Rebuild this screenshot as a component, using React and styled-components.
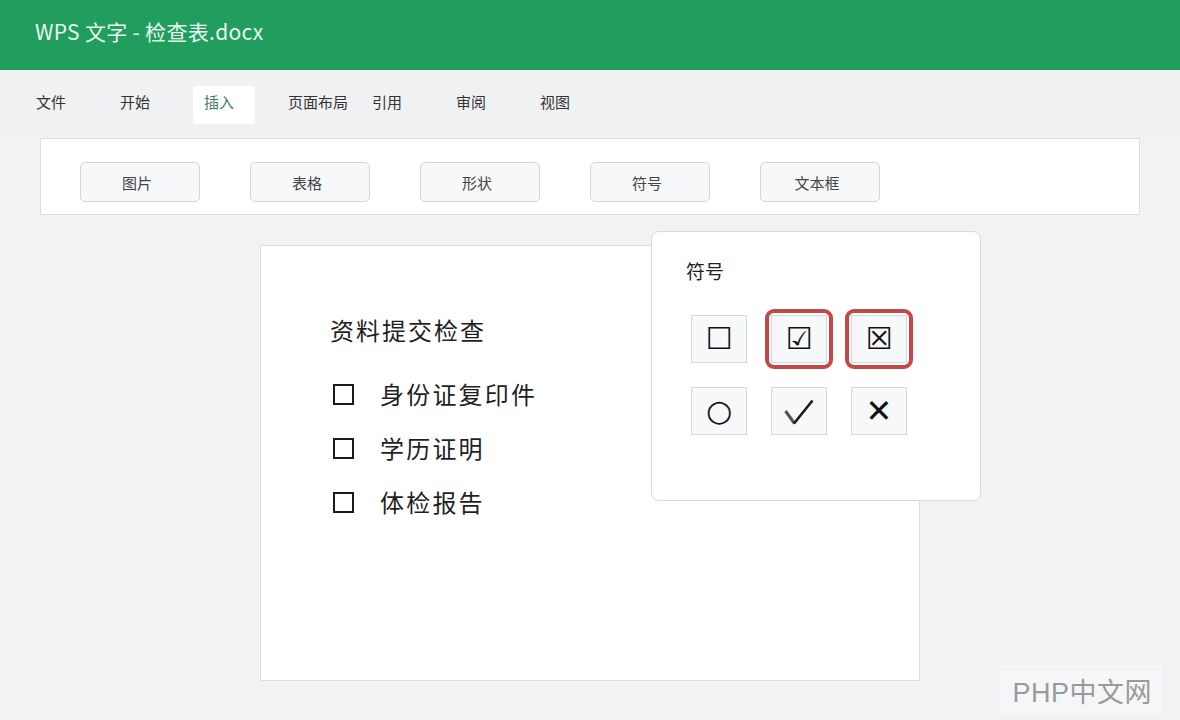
import React from "react";
import styled, { createGlobalStyle } from "styled-components";

const GlobalStyle = createGlobalStyle`
  html, body {
    margin: 0;
    padding: 0;
    background: #f0f2f4;
  }
  body {
    font-family: "Noto Sans CJK SC", "Noto Sans", sans-serif;
    color: #222;
  }
  * { box-sizing: border-box; }
`;

const Screen = styled.div`
  position: relative;
  width: 1180px;
  height: 720px;
  overflow: hidden;
  background: #f0f2f4;
  display: flex;
  flex-direction: column;
`;

const TitleBar = styled.header`
  height: 70px;
  flex: none;
  background: #219e5e;
  display: flex;
  align-items: center;
  padding: 0 0 8px 35px;
`;

const Title = styled.h1`
  margin: 0;
  font-size: 21px;
  font-weight: 400;
  color: #e9f7ef;
  letter-spacing: 0.3px;
`;

const TabBar = styled.nav`
  display: flex;
  gap: 22px;
  padding: 16px 0 14px 25px;
  background: #eff1f3;
`;

const Tab = styled.div`
  width: 62px;
  height: 38px;
  flex: none;
  padding: 6px 11px 0;
  white-space: nowrap;
  font-size: 15px;
  line-height: 20px;
  color: ${(p) => (p.$active ? "#3d7f67" : "#333")};
  background: ${(p) => (p.$active ? "#ffffff" : "transparent")};
  border-radius: 2px;
`;

const Toolbar = styled.div`
  margin: 0 40px;
  height: 77px;
  background: #fff;
  border: 1px solid #dcdee1;
  display: flex;
  align-items: flex-start;
  gap: 50px;
  padding: 23px 39px 0;
`;

const ToolButton = styled.button`
  width: 120px;
  height: 40px;
  flex: none;
  background: #f7f8fa;
  border: 1px solid #d3d6da;
  border-radius: 5px;
  font-family: "Noto Sans CJK SC", sans-serif;
  font-size: 15px;
  color: #444;
  padding: 0 6px 0 0;
`;

const Workspace = styled.main`
  position: relative;
  flex: 1;
  padding-top: 30px;
`;

const Page = styled.section`
  width: 660px;
  height: 436px;
  margin: 0 auto;
  background: #fff;
  border: 1px solid #dcdee1;
  padding: 68px 0 0 69px;
`;

const DocTitle = styled.h2`
  margin: 0 0 32px;
  font-size: 24px;
  line-height: 32px;
  font-weight: 400;
  letter-spacing: 2px;
  color: #1f1f1f;
`;

const CheckList = styled.ul`
  list-style: none;
  margin: 0;
  padding: 0;
  display: flex;
  flex-direction: column;
  gap: 22px;
`;

const CheckItem = styled.li`
  display: flex;
  align-items: center;
  gap: 26px;
  font-size: 24px;
  line-height: 32px;
  letter-spacing: 2.2px;
  color: #1f1f1f;
`;

const Box = styled.span`
  width: 21px;
  height: 21px;
  margin-left: 3px;
  border: 2px solid #1a1a1a;
  flex: none;
`;

const Popup = styled.div`
  position: absolute;
  left: 651px;
  top: 16px;
  width: 330px;
  height: 270px;
  background: #fff;
  border: 1px solid #d8dadd;
  border-radius: 8px;
  padding: 26px 0 0 34px;
`;

const PopupTitle = styled.div`
  font-size: 19px;
  line-height: 26px;
  color: #222;
`;

const SymbolGrid = styled.div`
  display: grid;
  grid-template-columns: repeat(3, 56px);
  grid-auto-rows: 48px;
  gap: 24px;
  margin: 31px 0 0 5px;
`;

const SymbolCell = styled.div`
  position: relative;
  display: flex;
  align-items: center;
  justify-content: center;
  background: #f7f8fa;
  border: 1px solid #d6d8db;
  font-family: "DejaVu Sans", sans-serif;
  font-size: ${(p) => p.$size || 22}px;
  line-height: 1;
  color: #111;

  ${(p) =>
    p.$marked &&
    `
    &::after {
      content: "";
      position: absolute;
      inset: -7px;
      border: 4px solid #c44848;
      border-radius: 9px;
    }
  `}
`;

const CheckMark = styled.svg`
  width: 30px;
  height: 27px;
  margin-top: 2px;
`;

const Watermark = styled.div`
  position: absolute;
  right: 18px;
  bottom: 6px;
  padding: 6px 10px 4px 12px;
  background: rgba(248, 248, 250, 0.6);
  font-family: "Liberation Sans", "Noto Sans CJK SC", sans-serif;
  font-size: 27px;
  color: #9a9a9a;
  letter-spacing: 0.5px;
`;

const tabs = ["文件", "开始", "插入", "页面布局", "引用", "审阅", "视图"];
const tools = ["图片", "表格", "形状", "符号", "文本框"];
const items = ["身份证复印件", "学历证明", "体检报告"];
const symbols = [
  { key: "box", ch: "☐", size: 30 },
  { key: "checked", ch: "☑", size: 30, marked: true },
  { key: "crossed", ch: "☒", size: 30, marked: true },
  { key: "circle", ch: "○", size: 30 },
  { key: "tick", icon: true },
  { key: "cross", ch: "✕", size: 32 },
];

export default function App() {
  return (
    <>
      <GlobalStyle />
      <Screen>
        <TitleBar>
          <Title>WPS 文字 - 检查表.docx</Title>
        </TitleBar>
        <TabBar>
          {tabs.map((t) => (
            <Tab key={t} $active={t === "插入"}>
              {t}
            </Tab>
          ))}
        </TabBar>
        <Toolbar>
          {tools.map((t) => (
            <ToolButton key={t}>{t}</ToolButton>
          ))}
        </Toolbar>
        <Workspace>
          <Page>
            <DocTitle>资料提交检查</DocTitle>
            <CheckList>
              {items.map((it) => (
                <CheckItem key={it}>
                  <Box />
                  <span>{it}</span>
                </CheckItem>
              ))}
            </CheckList>
          </Page>
          <Popup>
            <PopupTitle>符号</PopupTitle>
            <SymbolGrid>
              {symbols.map((s) => (
                <SymbolCell key={s.key} $size={s.size} $marked={s.marked}>
                  {s.icon ? (
                    <CheckMark viewBox="0 0 30 27" aria-label="✓">
                      <path
                        d="M1.5 12 L10.5 24.5"
                        stroke="#555"
                        strokeWidth="3"
                        fill="none"
                        strokeLinecap="butt"
                      />
                      <path
                        d="M10 24.5 L28.5 1.5"
                        stroke="#1a1a1a"
                        strokeWidth="2.6"
                        fill="none"
                        strokeLinecap="butt"
                      />
                    </CheckMark>
                  ) : (
                    s.ch
                  )}
                </SymbolCell>
              ))}
            </SymbolGrid>
          </Popup>
        </Workspace>
        <Watermark>PHP中文网</Watermark>
      </Screen>
    </>
  );
}
